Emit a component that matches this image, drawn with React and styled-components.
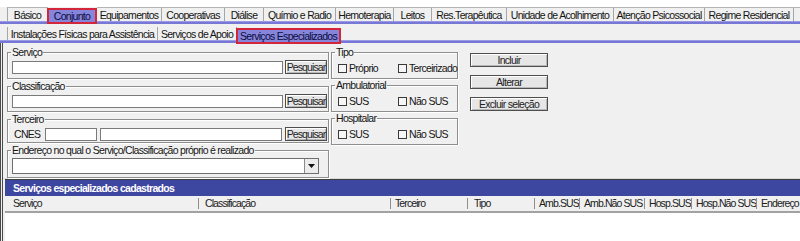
import React from 'react'
import styled, { createGlobalStyle, css } from 'styled-components'

const GlobalStyle = createGlobalStyle`
    html, body {
        margin: 0;
        padding: 0;
        background: #ffffff;
    }
    body {
        font-family: 'Liberation Sans', Arial, sans-serif;
        font-size: 10.5px;
        letter-spacing: -0.7px;
        color: #161616;
    }
`

const Window = styled.div`
    width: 800px;
    height: 241px;
    overflow: hidden;
    padding-top: 7px;
    box-sizing: border-box;
    background: #ffffff;
`
const Shell = styled.div`
    height: 234px;
    background: #f0f0f0;
    display: flex;
    flex-direction: column;
`
const TabRow = styled.div`
    display: flex;
    align-items: flex-end;
    height: ${(props) => props.$h}px;
    padding-left: 7px;
    flex: 0 0 auto;
`
const Tab = styled.div`
    flex: 0 0 ${(props) => props.$w}px;
    box-sizing: border-box;
    height: ${(props) => props.$h}px;
    display: flex;
    align-items: center;
    justify-content: center;
    white-space: nowrap;
    overflow: hidden;
    color: #141414;
    border-right: 1px solid #a6a6a6;
    border-top: ${(props) => (props.$top ? '1px solid #b4b4b4' : 'none')};
    &:first-child {
        border-left: 1px solid #a6a6a6;
    }
    ${(props) =>
        props.$active &&
        css`
            position: relative;
            z-index: 1;
            background: #8585dc;
            border: 2px solid #d3263a;
            margin-left: -1px;
            margin-bottom: -${props.$drop}px;
            height: ${props.$h + props.$drop - 1}px;
            color: #0c0c3c;
        `}
`
const BlueRule = styled.div`
    flex: 0 0 3px;
    background: #7777d6;
    border-top: 1px solid #9a9ae4;
    box-sizing: border-box;
`
const Panel = styled.div`
    flex: 1;
    display: flex;
    flex-direction: column;
    border-left: 3px double #4a4a4a;
    min-height: 0;
`
const FormArea = styled.div`
    flex: 0 0 134px;
    display: flex;
    padding: 3px 0 0 4px;
    box-sizing: border-box;
    border-bottom: 1px solid #dadada;
`
const Column = styled.div`
    display: flex;
    flex-direction: column;
    gap: ${(props) => props.$gap || 0}px;
    width: ${(props) => props.$w}px;
    margin-left: ${(props) => props.$ml || 0}px;
    padding-top: ${(props) => props.$pt || 0}px;
`
const Group = styled.fieldset`
    margin: 0;
    min-width: 0;
    border: 1px solid #8e8e8e;
    box-shadow: inset 1px 1px 0 #ffffff, 1px 1px 0 #ffffff;
    padding: 1px 1px 2px 4px;
    height: ${(props) => props.$h}px;
    box-sizing: border-box;
`
const Legend = styled.legend`
    padding: 0 1px;
    margin-left: -1px;
    line-height: 12px;
`
const Row = styled.div`
    display: flex;
    align-items: center;
    gap: ${(props) => props.$gap || 2}px;
    margin-top: 1px;
`
const Input = styled.div`
    flex: ${(props) => (props.$w ? `0 0 ${props.$w}px` : '1')};
    height: 13px;
    box-sizing: border-box;
    background: #ffffff;
    border: 1px solid #7a7a7a;
`
const Label = styled.span`
    padding: 0 2px 0 2px;
`
const Button = styled.div`
    width: ${(props) => props.$w}px;
    height: 14px;
    box-sizing: border-box;
    display: flex;
    align-items: center;
    justify-content: center;
    background: #e6e6e6;
    border: 1px solid #4e4e4e;
    box-shadow: inset 1px 1px 0 #ffffff, inset -1px -1px 0 #b8b8b8;
    white-space: nowrap;
    letter-spacing: ${(props) => (props.$tight ? '-0.9px' : '-0.7px')};
    color: #222;
`
const Combo = styled.div`
    display: flex;
    height: 16px;
    width: 307px;
    margin-top: 1px;
    box-sizing: border-box;
    background: #ffffff;
    border: 1px solid #6e6e6e;
    justify-content: flex-end;
`
const ComboArrow = styled.div`
    width: 13px;
    display: flex;
    align-items: center;
    justify-content: center;
    background: #ececec;
    border-left: 1px solid #8a8a8a;
`
const Checks = styled.div`
    display: grid;
    grid-template-columns: 60px auto;
    align-items: center;
    padding-left: 2px;
    margin-top: 3px;
`
const Check = styled.label`
    display: flex;
    align-items: center;
    gap: 2px;
    &::before {
        content: '';
        width: 9px;
        height: 9px;
        box-sizing: border-box;
        border: 1px solid #3a3a3a;
        background: #f6f6f6;
    }
`
const ListSection = styled.div`
    flex: 1;
    display: flex;
    flex-direction: column;
    margin-left: 2px;
    border-top: 1px solid #3e3e3e;
`
const Bar = styled.div`
    flex: 0 0 16px;
    display: flex;
    align-items: center;
    padding-left: 8px;
    background: #3e47a0;
    color: #ffffff;
    font-weight: bold;
`
const HeaderRow = styled.div`
    flex: 0 0 auto;
    display: flex;
    padding: 2px 0;
    border-bottom: 2px solid #a2a2a2;
    background: #f0f0f0;
`
const HeaderCell = styled.div`
    flex: 0 0 ${(props) => props.$w}px;
    box-sizing: border-box;
    height: 11px;
    line-height: 11px;
    padding-left: ${(props) => props.$pl || 4}px;
    border-right: 1px solid #8e8e8e;
    white-space: nowrap;
    overflow: hidden;
    letter-spacing: -0.9px;
    color: #202020;
`
const ListBody = styled.div`
    flex: 1;
    background: #ffffff;
`

const mainTabs = [
    { label: 'Básico', w: 41 },
    { label: 'Conjunto', w: 50, active: true },
    { label: 'Equipamentos', w: 65 },
    { label: 'Cooperativas', w: 63 },
    { label: 'Diálise', w: 39 },
    { label: 'Químio e Radio', w: 72 },
    { label: 'Hemoterapia', w: 58 },
    { label: 'Leitos', w: 38 },
    { label: 'Res.Terapêutica', w: 75 },
    { label: 'Unidade de Acolhimento', w: 107 },
    { label: 'Atenção Psicossocial', w: 91 },
    { label: 'Regime Residencial', w: 89 },
    { label: '', w: 30 },
]

const subTabs = [
    { label: 'Instalações Físicas para Assistência', w: 151 },
    { label: 'Serviços de Apoio', w: 79 },
    { label: 'Serviços Especializados', w: 105, active: true },
]

const columns = [
    { label: 'Serviço', w: 194, pl: 8 },
    { label: 'Classificação', w: 192, pl: 6 },
    { label: 'Terceiro', w: 77 },
    { label: 'Tipo', w: 67, pl: 6 },
    { label: 'Amb.SUS', w: 45 },
    { label: 'Amb.Não SUS', w: 65 },
    { label: 'Hosp.SUS', w: 47 },
    { label: 'Hosp.Não SUS', w: 65 },
    { label: 'Endereço', w: 60 },
]

const ArrowIcon = () => (
    <svg width="7" height="4" viewBox="0 0 7 4">
        <path d="M0 0h7L3.5 4z" fill="#111" />
    </svg>
)

const CheckGroup = ({ title, first, second }) => (
    <Group $h={33}>
        <Legend>{title}</Legend>
        <Checks>
            <Check>{first}</Check>
            <Check>{second}</Check>
        </Checks>
    </Group>
)

export default function App() {
    return (
        <Window>
            <GlobalStyle />
            <Shell>
                <TabRow $h={14}>
                    {mainTabs.map((t, i) => (
                        <Tab key={i} $w={t.w} $h={14} $top $active={t.active} $drop={3}>
                            {t.label}
                        </Tab>
                    ))}
                </TabRow>
                <BlueRule />
                <TabRow $h={16}>
                    {subTabs.map((t) => (
                        <Tab key={t.label} $w={t.w} $h={13} $active={t.active} $drop={4}>
                            {t.label}
                        </Tab>
                    ))}
                </TabRow>
                <BlueRule />
                <Panel>
                    <FormArea>
                        <Column $w={322} $gap={1}>
                            <Group $h={33}>
                                <Legend>Serviço</Legend>
                                <Row>
                                    <Input />
                                    <Button $w={42} $tight>Pesquisar</Button>
                                </Row>
                            </Group>
                            <Group $h={32}>
                                <Legend>Classificação</Legend>
                                <Row>
                                    <Input />
                                    <Button $w={42} $tight>Pesquisar</Button>
                                </Row>
                            </Group>
                            <Group $h={30}>
                                <Legend>Terceiro</Legend>
                                <Row $gap={3}>
                                    <Label>CNES</Label>
                                    <Input $w={52} />
                                    <Input />
                                    <Button $w={42} $tight>Pesquisar</Button>
                                </Row>
                            </Group>
                            <Group $h={34}>
                                <Legend>
                                    Endereço no qual o Serviço/Classificação
                                    próprio é realizado
                                </Legend>
                                <Combo>
                                    <ComboArrow>
                                        <ArrowIcon />
                                    </ComboArrow>
                                </Combo>
                            </Group>
                        </Column>
                        <Column $w={127} $ml={2} $gap={0}>
                            <CheckGroup title="Tipo" first="Próprio" second="Terceirizado" />
                            <CheckGroup title="Ambulatorial" first="SUS" second="Não SUS" />
                            <CheckGroup title="Hospitalar" first="SUS" second="Não SUS" />
                        </Column>
                        <Column $w={78} $ml={12} $gap={8} $pt={7}>
                            <Button $w={78}>Incluir</Button>
                            <Button $w={78}>Alterar</Button>
                            <Button $w={78}>Excluir seleção</Button>
                        </Column>
                    </FormArea>
                    <ListSection>
                        <Bar>Serviços especializados cadastrados</Bar>
                        <HeaderRow>
                            {columns.map((c) => (
                                <HeaderCell key={c.label} $w={c.w} $pl={c.pl}>
                                    {c.label}
                                </HeaderCell>
                            ))}
                        </HeaderRow>
                        <ListBody />
                    </ListSection>
                </Panel>
            </Shell>
        </Window>
    )
}
